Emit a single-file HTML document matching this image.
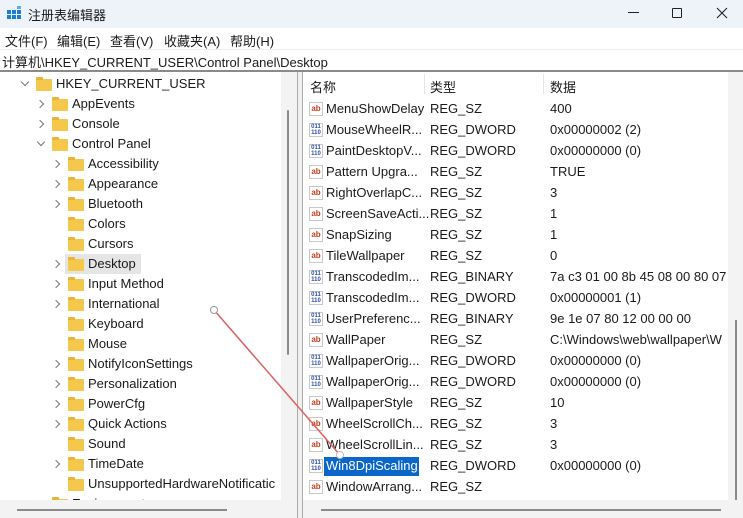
<!DOCTYPE html>
<html><head><meta charset="utf-8"><style>
*{margin:0;padding:0;box-sizing:border-box}
body{width:743px;height:518px;overflow:hidden;background:#fff;font-family:"Liberation Sans","Noto Sans CJK SC",sans-serif;font-size:13px;color:#1a1a1a;position:relative}
.a{position:absolute;white-space:nowrap}
.fold{position:absolute;width:16px;height:12px;background:#f5c74a;border-radius:1px}
.fold:before{content:"";position:absolute;left:0;top:-2px;width:7px;height:3px;background:#e8b43a;border-radius:1px 1px 0 0}
.chev{position:absolute;width:6px;height:6px;border-right:1.3px solid #777;border-bottom:1.3px solid #777;transform:rotate(-45deg)}
.chevd{transform:rotate(45deg)}
.ic{position:absolute;width:14px;height:14px;border:1px solid #c9c9c9;background:#fff;font-size:8px;font-weight:bold;line-height:11px;text-align:center}
.ab{color:#c43e1c}
.bn{color:#2a4fa8;font-size:6px;line-height:6px}
</style></head><body>
<div class="a" style="left:0;top:0;width:743px;height:28px;background:#eef3f9"></div>
<svg class="a" style="left:6px;top:6px" width="16" height="16"><rect x="1" y="4" width="4" height="4" fill="#1a7fd4"/><rect x="6" y="4" width="4" height="4" fill="#1a7fd4"/><rect x="1" y="9" width="4" height="4" fill="#1a7fd4"/><rect x="6" y="9" width="4" height="4" fill="#1a7fd4"/><rect x="11" y="9" width="4" height="4" fill="#1a7fd4"/><rect x="11" y="4" width="4" height="4" fill="#1a7fd4"/><rect x="11" y="0" width="4" height="3" fill="#5ab0ef"/></svg>
<div class="a" style="left:28px;top:5px;font-size:13px">注册表编辑器</div>
<div class="a" style="left:628px;top:12px;width:11px;height:1px;background:#222"></div>
<div class="a" style="left:672px;top:8px;width:10px;height:10px;border:1px solid #222;border-radius:1px"></div>
<svg class="a" style="left:716px;top:7px" width="12" height="12"><path d="M1 1L11 11M11 1L1 11" stroke="#222" stroke-width="1.1"/></svg>
<div class="a" style="left:5px;top:31px">文件(F)</div>
<div class="a" style="left:57px;top:31px">编辑(E)</div>
<div class="a" style="left:110px;top:31px">查看(V)</div>
<div class="a" style="left:164px;top:31px">收藏夹(A)</div>
<div class="a" style="left:230px;top:31px">帮助(H)</div>
<div class="a" style="left:0;top:49px;width:743px;height:1px;background:#eee"></div>
<div class="a" style="left:2px;top:52px">计算机\HKEY_CURRENT_USER\Control Panel\Desktop</div>
<div class="a" style="left:0;top:70px;width:743px;height:2px;background:#8a8a8a"></div>
<div class="a" style="left:281px;top:72px;width:16px;height:428px;background:#f3f3f3"></div>
<div class="a" style="left:287px;top:110px;width:2px;height:245px;background:#8a8a8a;border-radius:1px"></div>
<div class="a" style="left:297px;top:72px;width:6px;height:446px;background:#f0f0f0;border-left:1px solid #aaa;border-right:1px solid #aaa"></div>
<div class="a" style="left:65px;top:254px;width:76px;height:20px;background:#e5e5e5"></div>
<div class="a" style="left:324px;top:457px;width:95px;height:19px;background:#0a66c8"></div>
<div id="tree"></div>
<div id="right"></div>
<div class="a" style="left:0;top:500px;width:297px;height:18px;background:#f3f3f3"></div>
<div class="a" style="left:17px;top:509px;width:210px;height:2px;background:#8a8a8a"></div>
<div class="a" style="left:303px;top:500px;width:440px;height:18px;background:#f3f3f3"></div>
<div class="a" style="left:321px;top:509px;width:400px;height:2px;background:#8a8a8a"></div>
<div class="a" style="left:728px;top:72px;width:15px;height:428px;background:#f3f3f3"></div>
<div class="a" style="left:735px;top:320px;width:2px;height:180px;background:#8a8a8a"></div>
<div class="a" style="left:424px;top:74px;width:1px;height:20px;background:#e5e5e5"></div>
<div class="a" style="left:543px;top:74px;width:1px;height:20px;background:#e5e5e5"></div>
<div class="a" style="left:310px;top:77px">名称</div>
<div class="a" style="left:430px;top:77px">类型</div>
<div class="a" style="left:550px;top:77px">数据</div>
<svg class="a" style="left:0;top:0;pointer-events:none" width="743" height="518"><line x1="214" y1="310" x2="340" y2="455" stroke="#e06060" stroke-width="1.5"/><circle cx="214" cy="310" r="3.5" fill="#fff" stroke="#999"/><circle cx="340" cy="455" r="3.5" fill="#fff" stroke="#bbb"/></svg>
<script>
var t=[[0,"HKEY_CURRENT_USER",2],[1,"AppEvents",1],[1,"Console",1],[1,"Control Panel",2],[2,"Accessibility",1],[2,"Appearance",1],[2,"Bluetooth",1],[2,"Colors",0],[2,"Cursors",0],[2,"Desktop",1],[2,"Input Method",1],[2,"International",1],[2,"Keyboard",0],[2,"Mouse",0],[2,"NotifyIconSettings",1],[2,"Personalization",1],[2,"PowerCfg",1],[2,"Quick Actions",1],[2,"Sound",0],[2,"TimeDate",1],[2,"UnsupportedHardwareNotificatic",0],[1,"Environment",1]];
var h="";t.forEach(function(r,i){var y=74+20*i,x=36+16*r[0];
if(r[2]==1)h+='<div class="chev" style="left:'+(x-15)+'px;top:'+(y+7)+'px"></div>';
if(r[2]==2)h+='<div class="chev chevd" style="left:'+(x-14)+'px;top:'+(y+5)+'px"></div>';
h+='<div class="fold" style="left:'+x+'px;top:'+(y+5)+'px"></div><div class="a" style="left:'+(x+20)+'px;top:'+(y+2)+'px">'+r[1]+'</div>';});
document.getElementById("tree").innerHTML=h;
var R=[["a","MenuShowDelay","REG_SZ","400"],["b","MouseWheelR...","REG_DWORD","0x00000002 (2)"],["b","PaintDesktopV...","REG_DWORD","0x00000000 (0)"],["a","Pattern Upgra...","REG_SZ","TRUE"],["a","RightOverlapC...","REG_SZ","3"],["a","ScreenSaveActi...","REG_SZ","1"],["a","SnapSizing","REG_SZ","1"],["a","TileWallpaper","REG_SZ","0"],["b","TranscodedIm...","REG_BINARY","7a c3 01 00 8b 45 08 00 80 07"],["b","TranscodedIm...","REG_DWORD","0x00000001 (1)"],["b","UserPreferenc...","REG_BINARY","9e 1e 07 80 12 00 00 00"],["a","WallPaper","REG_SZ","C:\\Windows\\web\\wallpaper\\W"],["b","WallpaperOrig...","REG_DWORD","0x00000000 (0)"],["b","WallpaperOrig...","REG_DWORD","0x00000000 (0)"],["a","WallpaperStyle","REG_SZ","10"],["a","WheelScrollCh...","REG_SZ","3"],["a","WheelScrollLin...","REG_SZ","3"],["b","Win8DpiScaling","REG_DWORD","0x00000000 (0)"],["a","WindowArrang...","REG_SZ",""]];
h="";R.forEach(function(r,i){var y=99+21*i;
h+=r[0]=="a"?'<div class="ic ab" style="left:309px;top:'+(y+3)+'px">ab</div>':'<div class="ic bn" style="left:309px;top:'+(y+3)+'px">011<br>110</div>';
h+='<div class="a" style="left:326px;top:'+(y+2)+'px;'+(i==17?'color:#fff':'')+'">'+r[1]+'</div><div class="a" style="left:430px;top:'+(y+2)+'px">'+r[2]+'</div><div class="a" style="left:550px;top:'+(y+2)+'px;width:178px;overflow:hidden">'+r[3]+'</div>';});
document.getElementById("right").innerHTML=h;
</script>
</body></html>
